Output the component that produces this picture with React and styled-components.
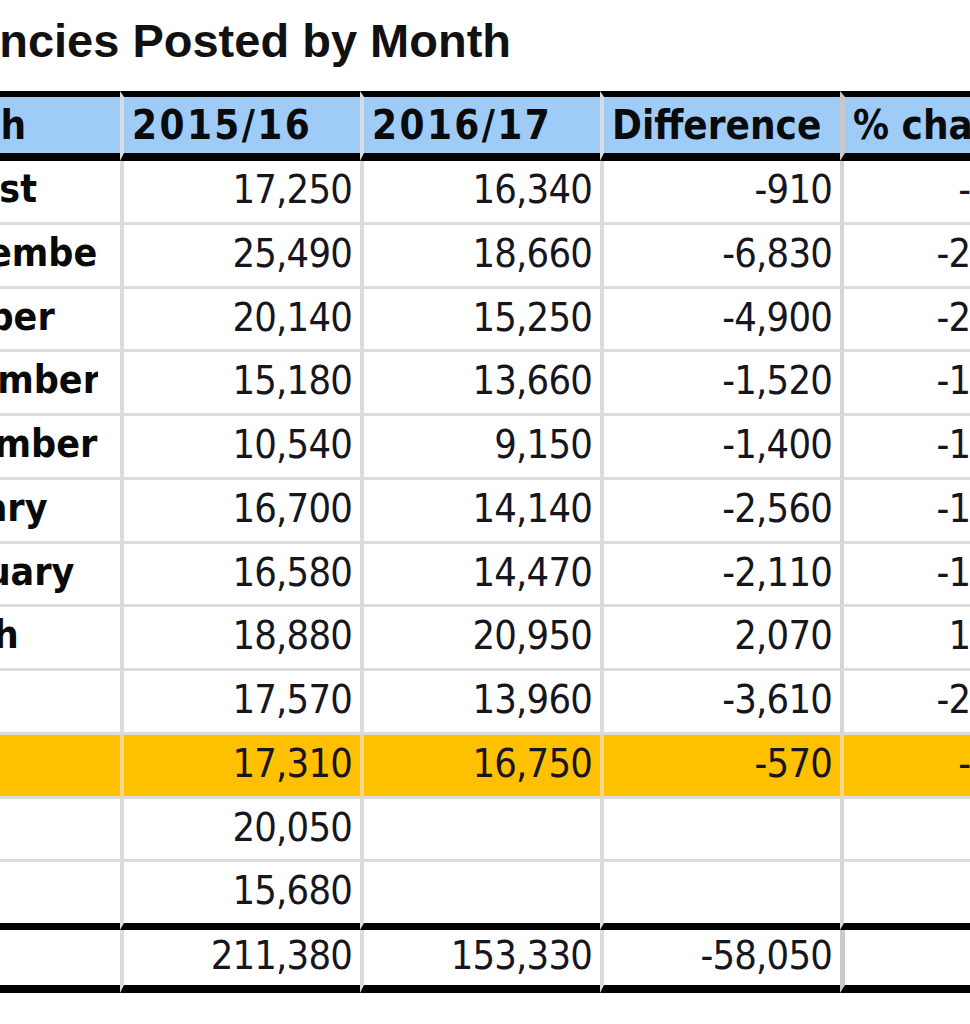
import styled, { createGlobalStyle, css } from "styled-components";

const GlobalStyle = createGlobalStyle`
  html, body {
    margin: 0;
    padding: 0;
    background: #ffffff;
  }
`;

const rows = [
  { month: "August", a: "17,250", b: "16,340", diff: "-910", pct: "-5%" },
  { month: "September", a: "25,490", b: "18,660", diff: "-6,830", pct: "-27%" },
  { month: "October", a: "20,140", b: "15,250", diff: "-4,900", pct: "-24%" },
  { month: "November", a: "15,180", b: "13,660", diff: "-1,520", pct: "-10%" },
  { month: "December", a: "10,540", b: "9,150", diff: "-1,400", pct: "-13%" },
  { month: "January", a: "16,700", b: "14,140", diff: "-2,560", pct: "-15%" },
  { month: "February", a: "16,580", b: "14,470", diff: "-2,110", pct: "-13%" },
  { month: "March", a: "18,880", b: "20,950", diff: "2,070", pct: "11%" },
  { month: "April", a: "17,570", b: "13,960", diff: "-3,610", pct: "-21%" },
  { month: "May", a: "17,310", b: "16,750", diff: "-570", pct: "-3%", highlight: true },
  { month: "June", a: "20,050", b: "", diff: "", pct: "" },
  { month: "July", a: "15,680", b: "", diff: "", pct: "" },
];

const total = { month: "Total", a: "211,380", b: "153,330", diff: "-58,050", pct: "" };

const Page = styled.div`
  width: 970px;
  height: 1024px;
  overflow: hidden;
  background: #fff;
`;

const Title = styled.h1`
  margin: 17px 0 0 -108px;
  height: 47px;
  font-family: "Liberation Sans", Arial, sans-serif;
  font-weight: bold;
  font-size: 47px;
  line-height: 47px;
  color: #111;
  white-space: nowrap;
`;

const Sheet = styled.table`
  margin: 27px 0 0 -120px;
  border-collapse: separate;
  border-spacing: 0;
  table-layout: fixed;
  width: 1153px;
  font-family: "DejaVu Sans Condensed", "DejaVu Sans", sans-serif;
  font-stretch: condensed;
  color: #161620;
`;

const Col = styled.col`
  width: ${(p) => p.$w}px;
`;

const HeadCell = styled.th`
  background: #9fcbf7;
  border-top: 6px solid #000;
  border-bottom: 8px solid #000;
  border-left: ${(p) => (p.$first ? "none" : p.$pct ? "5px solid #c9c9c9" : "4px solid #d6dde6")};
  padding: 0 8px 0 ${(p) => (p.$first ? "17px" : "8px")};
  line-height: 56px;
  font-size: 40px;
  font-weight: bold;
  letter-spacing: ${(p) => (p.$year ? "2.4px" : "0")};
  text-align: left;
  color: #0a0a0a;
  white-space: nowrap;
  overflow: hidden;
`;

const Cell = styled.td`
  border-left: ${(p) => (p.$first ? "none" : p.$pct ? "4px solid #d6d6d6" : "4px solid #dcdcdc")};
  border-bottom: 3px solid #dcdcdc;
  padding: 0 8px 4px ${(p) => (p.$first ? "17px" : "8px")};
  line-height: 56.75px;
  font-size: 39.5px;
  letter-spacing: -0.8px;
  text-align: right;
  white-space: nowrap;
  overflow: hidden;

  ${(p) =>
    p.$highlight &&
    css`
      background: #ffc000;
      border-left-color: ${p.$first ? "transparent" : "#f6d98f"};
    `}

  ${(p) =>
    p.$lastRow &&
    css`
      border-bottom: 7px solid #000;
    `}

  ${(p) =>
    p.$total &&
    css`
      line-height: 51px;
      border-bottom: 8px solid #000;
      border-left-color: ${p.$pct ? "#c9c9c9" : "#dcdcdc"};
      border-left-width: ${p.$pct ? "5px" : "4px"};
    `}
`;

const MonthLabel = styled.span`
  display: block;
  width: 201px;
  overflow: hidden;
  text-align: left;
  font-size: 39px;
  font-weight: bold;
  letter-spacing: 0;
  color: #0a0a0a;
`;

const BodyRow = ({ row, lastRow, isTotal }) => {
  const shared = { $highlight: row.highlight, $lastRow: lastRow, $total: isTotal };
  return (
    <tr>
      <Cell $first {...shared}>
        <MonthLabel>{row.month}</MonthLabel>
      </Cell>
      <Cell {...shared}>{row.a}</Cell>
      <Cell {...shared}>{row.b}</Cell>
      <Cell {...shared}>{row.diff}</Cell>
      <Cell $pct {...shared}>{row.pct}</Cell>
    </tr>
  );
};

const App = () => {
  return (
    <>
      <GlobalStyle />
      <Page>
        <Title>Vacancies Posted by Month</Title>
        <Sheet>
          <colgroup>
            <Col $w={240} />
            <Col $w={240} />
            <Col $w={240} />
            <Col $w={240} />
            <Col $w={193} />
          </colgroup>
          <thead>
            <tr>
              <HeadCell $first>Month</HeadCell>
              <HeadCell $year>2015/16</HeadCell>
              <HeadCell $year>2016/17</HeadCell>
              <HeadCell>Difference</HeadCell>
              <HeadCell $pct>% change</HeadCell>
            </tr>
          </thead>
          <tbody>
            {rows.map((row, i) => (
              <BodyRow key={row.month} row={row} lastRow={i === rows.length - 1} />
            ))}
            <BodyRow row={total} isTotal />
          </tbody>
        </Sheet>
      </Page>
    </>
  );
};

export default App;
